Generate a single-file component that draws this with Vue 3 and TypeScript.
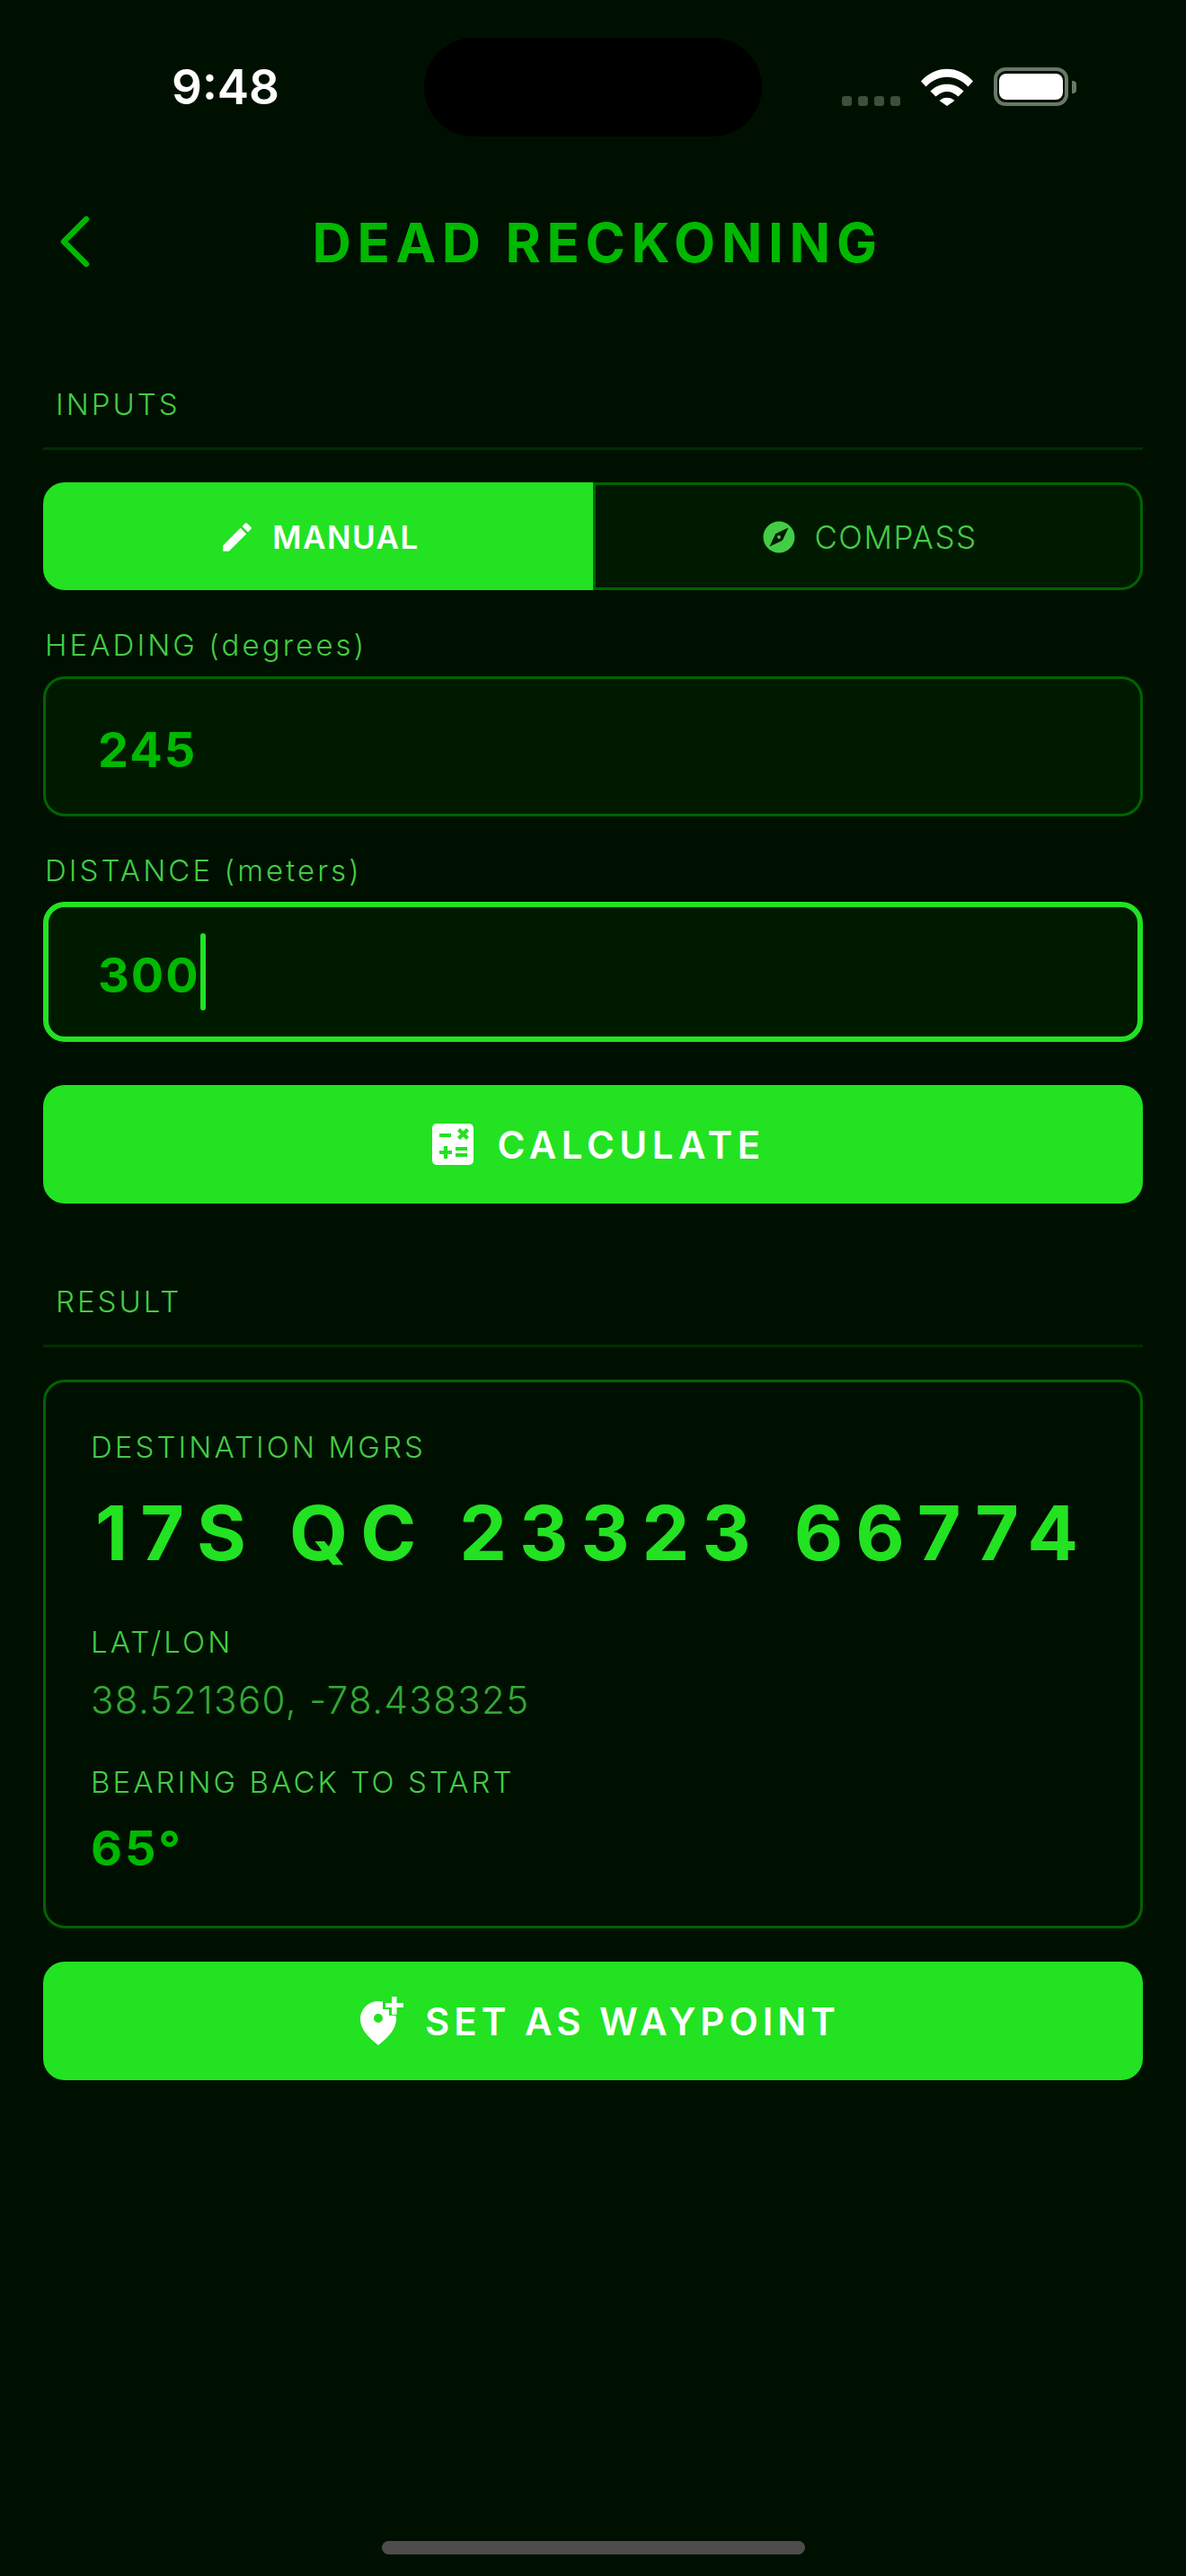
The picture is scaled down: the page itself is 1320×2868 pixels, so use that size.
<script setup lang="ts">
const fields = [
  { label: 'HEADING (degrees)', value: '245', focused: false },
  { label: 'DISTANCE (meters)', value: '300', focused: true },
]
</script>

<template>
  <div class="screen">
    <div class="status-bar">
      <span class="time">9:48</span>
      <div class="island"></div>
      <div class="status-icons">
        <div class="signal"><i></i><i></i><i></i><i></i></div>
        <svg class="wifi" width="58" height="42" viewBox="0 0 58 42">
          <path d="M0 14.500C16-4 42-4 58 14.500L52.500 20.500C39 6 19 6 5.500 20.500Z" fill="#fff" />
          <path d="M10.500 25.500C20 15 38 15 47.500 25.500L41.500 31.500C34 24 24 24 16.500 31.500Z" fill="#fff" />
          <path d="M20.500 36C25 31.500 33 31.500 37.500 36L29 42Z" fill="#fff" />
        </svg>
        <div class="battery">
          <div class="battery-body"><div class="battery-fill"></div></div>
          <div class="battery-nub"></div>
        </div>
      </div>
    </div>

    <header class="nav">
      <svg class="back" width="36" height="58" viewBox="0 0 36 58">
        <path d="M31 4 6 29l25 25" fill="none" stroke="#00b800" stroke-width="6.500" stroke-linecap="round" stroke-linejoin="round" />
      </svg>
      <h1 class="title">DEAD RECKONING</h1>
    </header>

    <section class="inputs">
      <div class="section-title">INPUTS</div>
      <div class="toggle">
        <div class="toggle-btn active">
          <svg width="42" height="42" viewBox="0 0 24 24">
            <path d="M3 17.250V21h3.750L17.810 9.940l-3.750-3.750L3 17.250zM20.710 7.040a1 1 0 0 0 0-1.410l-2.340-2.340a1 1 0 0 0-1.410 0l-1.830 1.830 3.750 3.750 1.830-1.830z" fill="#fff" />
          </svg>
          <span>MANUAL</span>
        </div>
        <div class="toggle-btn">
          <svg width="42" height="42" viewBox="0 0 24 24">
            <path fill-rule="evenodd" d="M12 10.900c-.61 0-1.100.49-1.100 1.100s.49 1.100 1.100 1.100c.61 0 1.100-.49 1.100-1.100s-.49-1.100-1.100-1.100zM12 2C6.480 2 2 6.480 2 12s4.480 10 10 10 10-4.480 10-10S17.520 2 12 2zm2.190 12.190L6 18l3.810-8.190L18 6l-3.810 8.190z" fill="#44cc44" />
          </svg>
          <span>COMPASS</span>
        </div>
      </div>

      <div v-for="field in fields" :key="field.label" class="field">
        <label class="field-label">{{ field.label }}</label>
        <div class="input" :class="{ focused: field.focused }">
          <span class="input-value">{{ field.value }}</span>
          <span v-if="field.focused" class="caret"></span>
        </div>
      </div>

      <button class="primary calculate">
        <svg width="46" height="46" viewBox="0 0 46 46">
          <path fill="#fff" d="M5 0h36a5 5 0 0 1 5 5v36a5 5 0 0 1-5 5H5a5 5 0 0 1-5-5V5a5 5 0 0 1 5-5z" />
          <path fill="#22e222" d="M8 11h13v4H8zM13 25h4v5h5v4h-5v5h-4v-5H8v-4h5zM26 26h13v4H26zM26 33h13v4H26zM28 8l3-3 3.500 3.500L38 5l3 3-3.500 3.500L41 15l-3 3-3.500-3.500L31 18l-3-3 3.500-3.500z" />
        </svg>
        <span>CALCULATE</span>
      </button>
    </section>

    <section class="result">
      <div class="section-title">RESULT</div>
      <div class="card">
        <div class="card-label">DESTINATION MGRS</div>
        <div class="mgrs">17S QC 23323 66774</div>
        <div class="card-label latlon-label">LAT/LON</div>
        <div class="latlon">38.521360, -78.438325</div>
        <div class="card-label bearing-label">BEARING BACK TO START</div>
        <div class="bearing">65°</div>
      </div>
      <button class="primary waypoint">
        <svg width="48" height="54" viewBox="0 0 48 54">
          <path fill="#fff" fill-rule="evenodd" d="M25 5.600V14h7v7h7.400c.4 1.300.6 2.700.6 4 0 10-8 20-20 29C8 45 0 35 0 25 0 14 9 5 20 5c1.700 0 3.400.2 5 .6zM20 19a5 5 0 1 0 0 10 5 5 0 0 0 0-10z" />
          <path fill="#fff" d="M35 0h5.500v7H48v5h-7.500v8H35v-8h-7V7h7z" />
        </svg>
        <span>SET AS WAYPOINT</span>
      </button>
    </section>

    <div class="home-bar"></div>
  </div>
</template>

<style scoped>
.screen {
  width: 1320px;
  height: 2868px;
  background: #001000;
  font-family: Inter, "Liberation Sans", sans-serif;
  display: flex;
  flex-direction: column;
  overflow: hidden;
}

.status-bar {
  height: 152px;
  padding-top: 42px;
  box-sizing: border-box;
  display: flex;
  align-items: flex-start;
}

.time {
  width: 472px;
  padding: 28px 0 0 191px;
  box-sizing: border-box;
  color: #fff;
  font-size: 53px;
  line-height: 54px;
  font-weight: 600;
}

.island {
  width: 376px;
  height: 110px;
  border-radius: 55px;
  background: #000;
}

.status-icons {
  display: flex;
  align-items: flex-end;
  padding: 33px 0 0 89px;
  gap: 23px;
}

.signal {
  display: flex;
  gap: 7px;
}

.signal i {
  width: 11px;
  height: 11px;
  border-radius: 3px;
  background: #3c503c;
}

.battery {
  display: flex;
  align-items: center;
  gap: 4px;
}

.battery-body {
  width: 83px;
  height: 43px;
  box-sizing: border-box;
  border: 4px solid #667a66;
  border-radius: 13px;
  padding: 3px 2px;
}

.battery-fill {
  height: 100%;
  background: #fff;
  border-radius: 8px;
}

.battery-nub {
  width: 5px;
  height: 14px;
  background: #667a66;
  border-radius: 0 4px 4px 0;
}

.nav {
  height: 132px;
  margin-top: 52px;
  position: relative;
  display: flex;
  align-items: center;
  justify-content: center;
}

.back {
  position: absolute;
  left: 65px;
  top: 36px;
}

.title {
  margin: 0;
  padding-left: 10px;
  color: #00b800;
  font-size: 60px;
  font-weight: 700;
  letter-spacing: 6.600px;
  line-height: 72px;
}

.inputs {
  padding: 0 48px;
  margin-top: 94px;
}

.section-title {
  color: #44cc44;
  font-size: 33px;
  line-height: 40px;
  font-weight: 300;
  letter-spacing: 3px;
  padding: 0 14px 28px;
  border-bottom: 3px solid #002e00;
}

.toggle {
  display: flex;
  height: 120px;
  margin-top: 36px;
}

.toggle-btn {
  flex: 1;
  box-sizing: border-box;
  display: flex;
  align-items: center;
  justify-content: center;
  gap: 18px;
  padding: 2px 0 0 2px;
  color: #44cc44;
  font-size: 35px;
  font-weight: 300;
  letter-spacing: 1.500px;
  background: #001a00;
  border: 3px solid #006400;
  border-left: 0;
  border-radius: 0 24px 24px 0;
}

.toggle-btn.active {
  flex: 0 0 615px;
  background: #22e222;
  color: #fff;
  font-weight: 600;
  border: 0;
  border-right: 3px solid #006400;
  border-radius: 24px 0 0 24px;
}

.field {
  margin-top: 41px;
}

.field + .field {
  margin-top: 40px;
}

.field-label {
  display: block;
  color: #44cc44;
  font-size: 33px;
  font-weight: 300;
  line-height: 40px;
  letter-spacing: 3.100px;
  padding-left: 2px;
}

.input {
  margin-top: 15px;
  height: 156px;
  box-sizing: border-box;
  border: 3px solid #006400;
  border-radius: 24px;
  background: #001a00;
  display: flex;
  align-items: center;
  padding-left: 58px;
}

.input.focused {
  border: 6px solid #22e222;
  padding-left: 55px;
}

.input-value {
  padding-top: 6px;
  color: #00b800;
  font-size: 54px;
  font-weight: 700;
  letter-spacing: 2px;
}

.caret {
  width: 6px;
  height: 86px;
  border-radius: 3px;
  background: #22e222;
}

.primary {
  width: 100%;
  border: 0;
  border-radius: 24px;
  background: #22e222;
  color: #fff;
  font-family: inherit;
  font-size: 42px;
  font-weight: 600;
  letter-spacing: 5.500px;
  display: flex;
  align-items: center;
  justify-content: center;
  gap: 26px;
  height: 132px;
  padding: 0;
}

.calculate {
  margin-top: 48px;
  padding-left: 13px;
}

.result {
  padding: 0 48px;
  margin-top: 89px;
}

.card {
  margin-top: 36px;
  box-sizing: border-box;
  border: 3px solid #006400;
  border-radius: 24px;
  padding: 52px 50px 54px;
}

.card-label {
  color: #44cc44;
  font-size: 33px;
  font-weight: 300;
  line-height: 40px;
  letter-spacing: 3.100px;
}

.mgrs {
  margin: 26px -30px 0 5px;
  color: #22e222;
  font-size: 84px;
  line-height: 100px;
  font-weight: 700;
  letter-spacing: 14px;
  white-space: nowrap;
}

.latlon-label {
  margin-top: 51px;
}

.latlon {
  margin-top: 20px;
  color: #33aa33;
  font-size: 42px;
  font-weight: 300;
  line-height: 50px;
  letter-spacing: 1.400px;
}

.bearing-label {
  margin-top: 46px;
}

.bearing {
  margin-top: 22px;
  color: #00b800;
  font-size: 54px;
  line-height: 64px;
  font-weight: 700;
  letter-spacing: 3px;
}

.waypoint {
  margin-top: 37px;
  padding-left: 16px;
  gap: 24px;
  letter-spacing: 5px;
}

.home-bar {
  width: 471px;
  height: 15px;
  border-radius: 8px;
  background: #4d4d4d;
  margin: auto auto 24px;
}
</style>

<style>
html,
body {
  margin: 0;
  background: #001000;
}
</style>
